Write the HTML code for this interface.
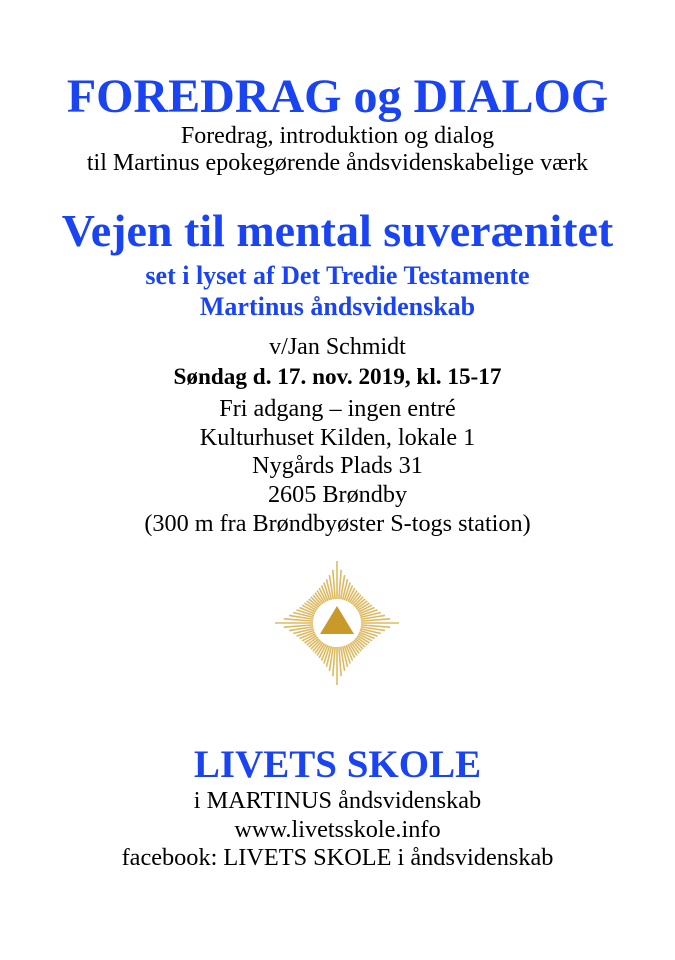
<!DOCTYPE html>
<html><head><meta charset="utf-8"><style>
body{margin:0;width:675px;height:960px;background:#fff;position:relative;overflow:hidden;font-family:"Liberation Serif",serif;color:#000}
.l{position:absolute;left:0;width:675px;text-align:center;white-space:nowrap;line-height:1}
.b{color:#1a44f2;font-weight:bold}
</style></head><body>
<div class="l b" style="top:73px;font-size:48px">FOREDRAG og DIALOG</div>
<div class="l" style="top:124px;font-size:24px">Foredrag, introduktion og dialog</div>
<div class="l" style="top:151px;font-size:24px">til Martinus epokegørende åndsvidenskabelige værk</div>
<div class="l b" style="top:208px;font-size:46px">Vejen til mental suverænitet</div>
<div class="l b" style="top:263px;font-size:26px">set i lyset af Det Tredie Testamente</div>
<div class="l b" style="top:294px;font-size:26px">Martinus åndsvidenskab</div>
<div class="l" style="top:335px;font-size:24px">v/Jan Schmidt</div>
<div class="l" style="top:366px;font-size:23.2px;font-weight:bold">Søndag d. 17. nov. 2019, kl. 15-17</div>
<div class="l" style="top:397px;font-size:24.2px">Fri adgang – ingen entré</div>
<div class="l" style="top:426px;font-size:24.2px">Kulturhuset Kilden, lokale 1</div>
<div class="l" style="top:454px;font-size:24.2px">Nygårds Plads 31</div>
<div class="l" style="top:483px;font-size:24.2px">2605 Brøndby</div>
<div class="l" style="top:512px;font-size:24.2px">(300 m fra Brøndbyøster S-togs station)</div>
<svg id="star" style="position:absolute;left:270px;top:560px" width="135" height="135" viewBox="0 0 135 135"></svg>
<div class="l b" style="top:745px;font-size:39px">LIVETS SKOLE</div>
<div class="l" style="top:789px;font-size:24.3px">i MARTINUS åndsvidenskab</div>
<div class="l" style="top:818px;font-size:24.3px">www.livetsskole.info</div>
<div class="l" style="top:846px;font-size:24.3px">facebook: LIVETS SKOLE i åndsvidenskab</div>
<script>
var s=document.getElementById('star'),cx=67,cy=63,R=62,p=0.8,h='';
for(var i=0;i<80;i++){var t=i/80*Math.PI*2,c=Math.abs(Math.cos(t)),n=Math.abs(Math.sin(t));
var r=R/Math.pow(Math.pow(c,p)+Math.pow(n,p),1/p);
var x1=cx+Math.cos(t)*24,y1=cy+Math.sin(t)*24,x2=cx+Math.cos(t)*r,y2=cy+Math.sin(t)*r;
h+='<line x1="'+x1+'" y1="'+y1+'" x2="'+x2+'" y2="'+y2+'" stroke="#d4a93a" stroke-width="1.6" stroke-opacity="0.8"/>';}
h+='<polygon points="67,46 84,74 50,74" fill="#c9992a"/>';
s.innerHTML=h;
</script>
</body></html>
